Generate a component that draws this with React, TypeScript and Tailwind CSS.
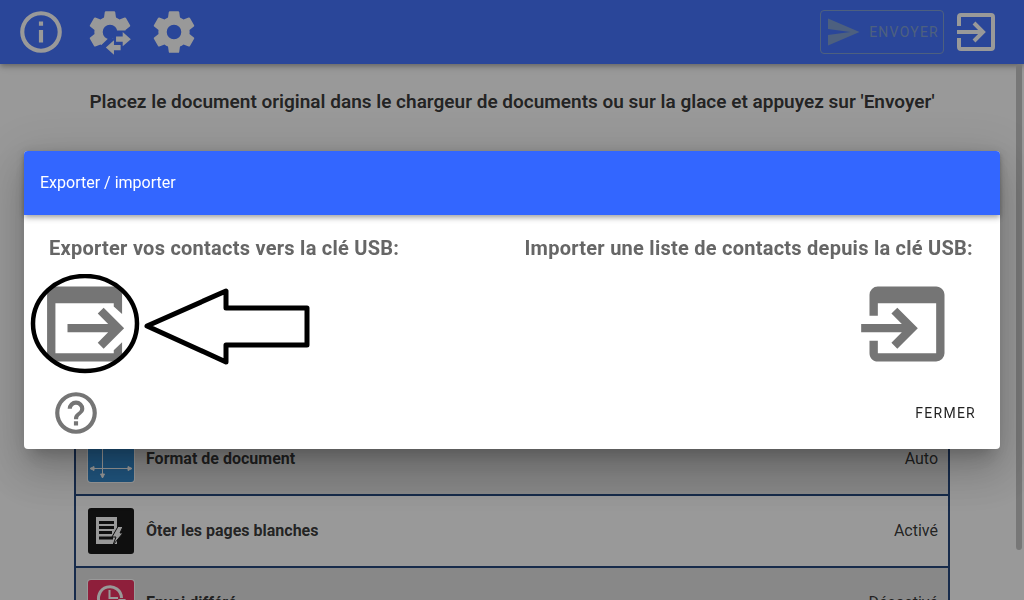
import { useState } from 'react'

const COG =
  'M12,15.5A3.5,3.5 0 0,1 8.5,12A3.5,3.5 0 0,1 12,8.5A3.5,3.5 0 0,1 15.5,12A3.5,3.5 0 0,1 12,15.5M19.43,12.97C19.47,12.65 19.5,12.33 19.5,12C19.5,11.67 19.47,11.34 19.43,11L21.54,9.37C21.73,9.22 21.78,8.95 21.66,8.73L19.66,5.27C19.54,5.05 19.27,4.96 19.05,5.05L16.56,6.05C16.04,5.66 15.5,5.32 14.87,5.07L14.5,2.42C14.46,2.18 14.25,2 14,2H10C9.75,2 9.54,2.18 9.5,2.42L9.13,5.07C8.5,5.32 7.96,5.66 7.44,6.05L4.95,5.05C4.73,4.96 4.46,5.05 4.34,5.27L2.34,8.73C2.21,8.95 2.27,9.22 2.46,9.37L4.57,11C4.53,11.34 4.5,11.67 4.5,12C4.5,12.33 4.53,12.65 4.57,12.97L2.46,14.63C2.27,14.78 2.21,15.05 2.34,15.27L4.34,18.73C4.46,18.95 4.73,19.03 4.95,18.95L7.44,17.94C7.96,18.34 8.5,18.68 9.13,18.93L9.5,21.58C9.54,21.82 9.75,22 10,22H14C14.25,22 14.46,21.82 14.5,21.58L14.87,18.93C15.5,18.67 16.04,18.34 16.56,17.94L19.05,18.95C19.27,19.03 19.54,18.95 19.66,18.73L21.66,15.27C21.78,15.05 21.73,14.78 21.54,14.63L19.43,12.97Z'
const INFO =
  'M11,9H13V7H11M12,20C7.59,20 4,16.41 4,12C4,7.59 7.59,4 12,4C16.41,4 20,7.59 20,12C20,16.41 16.41,20 12,20M12,2A10,10 0 0,0 2,12A10,10 0 0,0 12,22A10,10 0 0,0 22,12A10,10 0 0,0 12,2M11,17H13V11H11V17Z'
const HELP =
  'M11,18H13V16H11V18M12,2A10,10 0 0,0 2,12A10,10 0 0,0 12,22A10,10 0 0,0 22,12A10,10 0 0,0 12,2M12,20C7.59,20 4,16.41 4,12C4,7.59 7.59,4 12,4C16.41,4 20,7.59 20,12C20,16.41 16.41,20 12,20M12,6A4,4 0 0,0 8,10H10A2,2 0 0,1 12,8A2,2 0 0,1 14,10C14,12 11,11.75 11,15H13C13,12.75 16,12.5 16,10A4,4 0 0,0 12,6Z'
const SEND = 'M2,21L23,12L2,3V10L17,12L2,14V21Z'
const EXPORT =
  'M9,12H18.76L16.26,9.5L17.67,8.08L22.59,13L17.67,17.92L16.26,16.5L18.76,14H9V12M20.1,3C21.2,3 22.1,3.9 22.1,5V9.6L20.1,7.8V7H6.1V19H20.1V18.3L22.1,16.4V19A2,2 0 0,1 20.1,21H6.1C5,21 4.1,20.1 4.1,19V5A2,2 0 0,1 6.1,3H20.1Z'
const IMPORT =
  'M1,12H10.76L8.26,9.5L9.67,8.08L14.59,13L9.67,17.92L8.26,16.5L10.76,14H1V12M19,3C20.11,3 21,3.9 21,5V19A2,2 0 0,1 19,21H5C3.89,21 3,20.1 3,19V16H5V19H19V7H5V10H3V5A2,2 0 0,1 5,3H19Z'

function Icon({ d, className }: { d: string; className: string }) {
  return (
    <svg viewBox="0 0 24 24" fill="currentColor" fillRule="evenodd" className={className} aria-hidden="true">
      <path d={d} />
    </svg>
  )
}

function CogTransferIcon() {
  return (
    <svg viewBox="0 0 24 24" fill="currentColor" className="size-[50px]" aria-hidden="true">
      <clipPath id="cog-part">
        <path d="M0,0H24V11.3H13.500V15.200H11L6.500,19.500L0,24Z" />
      </clipPath>
      <path d={COG} clipPath="url(#cog-part)" />
      <path d="M14.9,14.2H18.1V12L22,15.5L18.1,18.9V16.7H14.9Z" />
      <path d="M17.1,18.2H13.9V16L10,19.4L13.9,22.9V20.7H17.1Z" />
    </svg>
  )
}

function QuitIcon() {
  return (
    <svg viewBox="0 0 38 38" fill="none" stroke="currentColor" strokeWidth="4" className="size-[38px]" aria-hidden="true">
      <path d="M2 13V4a2 2 0 0 1 2-2h30a2 2 0 0 1 2 2v30a2 2 0 0 1-2 2H4a2 2 0 0 1-2-2v-9" />
      <path d="M0 19h25M17 10l9 9-9 9" />
    </svg>
  )
}

function FormatIcon() {
  return (
    <svg viewBox="0 0 48 48" className="size-12" aria-hidden="true">
      <rect width="48" height="48" rx="4" fill="#fff" />
      <rect x="1" y="1" width="46" height="46" rx="3" fill="#2080cc" />
      <g stroke="#fff" fill="#fff">
        <path d="M15.500 4V42M4 33.500H44" />
        <path d="M13.500 39h4l-2 4zM7 31.500v4l-4-2zM41 31.500v4l4-2z" />
      </g>
    </svg>
  )
}

function BlankPagesIcon() {
  return (
    <svg viewBox="0 0 48 48" className="size-12" aria-hidden="true">
      <rect x="1" y="1" width="46" height="46" rx="3" fill="#000" />
      <path d="M9 10H30V37H9Z" fill="#fff" />
      <path d="M12 15.500H27M12 20.500H27M12 25.500H25M12 31H26" stroke="#000" strokeWidth="3" />
      <path d="M31 19.500H36L33 26H36L26 38L29 30H25Z" fill="#fff" stroke="#000" strokeWidth="1" />
    </svg>
  )
}

function DelayedIcon() {
  return (
    <svg viewBox="0 0 48 48" className="size-12" aria-hidden="true">
      <rect width="48" height="48" rx="4" fill="#fff" />
      <rect x="1" y="1" width="46" height="46" rx="3" fill="#ea1f52" />
      <g fill="none" stroke="#fff" strokeWidth="3">
        <path d="M31 27.500A11.500 11.500 0 1 1 34.500 19" />
        <path d="M22.500 11V19H31" strokeWidth="2" />
      </g>
      <path d="M31 20H39L35 25Z" fill="#fff" />
    </svg>
  )
}

const settings = [
  { label: 'Format de document', value: 'Auto', icon: <FormatIcon /> },
  { label: 'Ôter les pages blanches', value: 'Activé', icon: <BlankPagesIcon /> },
  { label: 'Envoi différé', value: 'Désactivé', icon: <DelayedIcon /> },
]

function Toolbar() {
  return (
    <header className="relative flex h-16 items-center bg-[#3366ff] pl-4 pr-[29px] text-white shadow-[0_2px_4px_-1px_rgba(0,0,0,0.2),0_4px_5px_rgba(0,0,0,0.14),0_1px_10px_rgba(0,0,0,0.12)]">
      <button aria-label="Informations">
        <Icon d={INFO} className="size-[50px]" />
      </button>
      <button aria-label="Exporter / importer" className="ml-[19px]">
        <CogTransferIcon />
      </button>
      <button aria-label="Paramètres" className="ml-3.5">
        <Icon d={COG} className="size-[50px]" />
      </button>
      <button
        disabled
        className="ml-auto flex h-11 items-center gap-2 rounded border border-[#7396cf] px-1 text-sm tracking-[1.25px] text-[#7396cf]"
      >
        <Icon d={SEND} className="size-9" />
        ENVOYER
      </button>
      <button aria-label="Quitter" className="ml-[13px]">
        <QuitIcon />
      </button>
    </header>
  )
}

function ExportImportDialog({ onClose }: { onClose: () => void }) {
  return (
    <div className="fixed inset-0 z-10 flex items-center justify-center bg-[#212121]/46 px-6">
      <section
        role="dialog"
        aria-labelledby="dialog-title"
        className="w-full rounded bg-white shadow-[0_11px_15px_-7px_rgba(0,0,0,0.2),0_24px_38px_3px_rgba(0,0,0,0.14),0_9px_46px_8px_rgba(0,0,0,0.12)]"
      >
        <h2
          id="dialog-title"
          className="flex h-16 items-center rounded-t bg-[#3366ff] px-4 text-base text-white shadow-[0_2px_4px_-1px_rgba(0,0,0,0.2),0_4px_5px_rgba(0,0,0,0.14),0_1px_10px_rgba(0,0,0,0.12)]"
        >
          Exporter / importer
        </h2>
        <div className="flex justify-between pl-[25px] pr-[27px] pt-[17px] text-[#757575]">
          <div>
            <h3 className="text-xl font-bold leading-8 tracking-[0.0125em] text-[#666]">
              Exporter vos contacts vers la clé USB:
            </h3>
            <div className="relative -ml-[19px] mt-2.5">
              <button aria-label="Exporter" className="block">
                <Icon d={EXPORT} className="size-[100px]" />
              </button>
              {/* hand-drawn hint over the export button */}
              <svg
                viewBox="0 0 280 100"
                fill="none"
                stroke="#000"
                strokeWidth="5"
                className="pointer-events-none absolute left-0 top-0 h-[100px] w-[280px]"
                aria-hidden="true"
              >
                <ellipse cx="55" cy="49.500" rx="52" ry="47.500" strokeWidth="4.500" />
                <path d="M117 52L196 17V34H277V71H196V88Z" strokeLinejoin="round" />
              </svg>
            </div>
          </div>
          <div className="flex flex-col items-end">
            <h3 className="text-xl font-bold leading-8 tracking-[0.0125em] text-[#666]">
              Importer une liste de contacts depuis la clé USB:
            </h3>
            <button aria-label="Importer" className="mr-4 mt-2.5">
              <Icon d={IMPORT} className="size-[100px]" />
            </button>
          </div>
        </div>
        <div className="flex items-center justify-between pb-[11px] pl-[27px] pr-6 pt-3.5">
          <button aria-label="Aide" className="text-[#757575]">
            <Icon d={HELP} className="size-[50px]" />
          </button>
          <button onClick={onClose} className="text-sm tracking-[1.25px] text-black/87">
            FERMER
          </button>
        </div>
      </section>
    </div>
  )
}

export default function App() {
  const [open, setOpen] = useState(true)

  return (
    <div className="relative h-screen overflow-hidden bg-white font-[Roboto,sans-serif] text-black/87">
      <Toolbar />
      <main>
        <h1 className="pt-6 text-center text-[19px] font-semibold leading-7">
          Placez le document original dans le chargeur de documents ou sur la glace et appuyez sur 'Envoyer'
        </h1>
        <ul className="mx-auto mt-[306px] w-[86%] max-w-[876px] border-x-2 border-t-2 border-[#10356f]">
          {settings.map((s) => (
            <li key={s.label} className="flex h-[72px] items-center gap-[11px] border-b-2 border-[#10356f] pl-[11px] pr-2.5 odd:bg-[#e0e0e0]">
              {s.icon}
              <span className="flex-1 font-bold">{s.label}</span>
              <span>{s.value}</span>
            </li>
          ))}
        </ul>
      </main>
      {/* scroll thumb */}
      <div className="absolute right-0.5 top-16 h-[81%] w-1.5 rounded-full bg-[#c1c1c1]" />
      {open && <ExportImportDialog onClose={() => setOpen(false)} />}
    </div>
  )
}
